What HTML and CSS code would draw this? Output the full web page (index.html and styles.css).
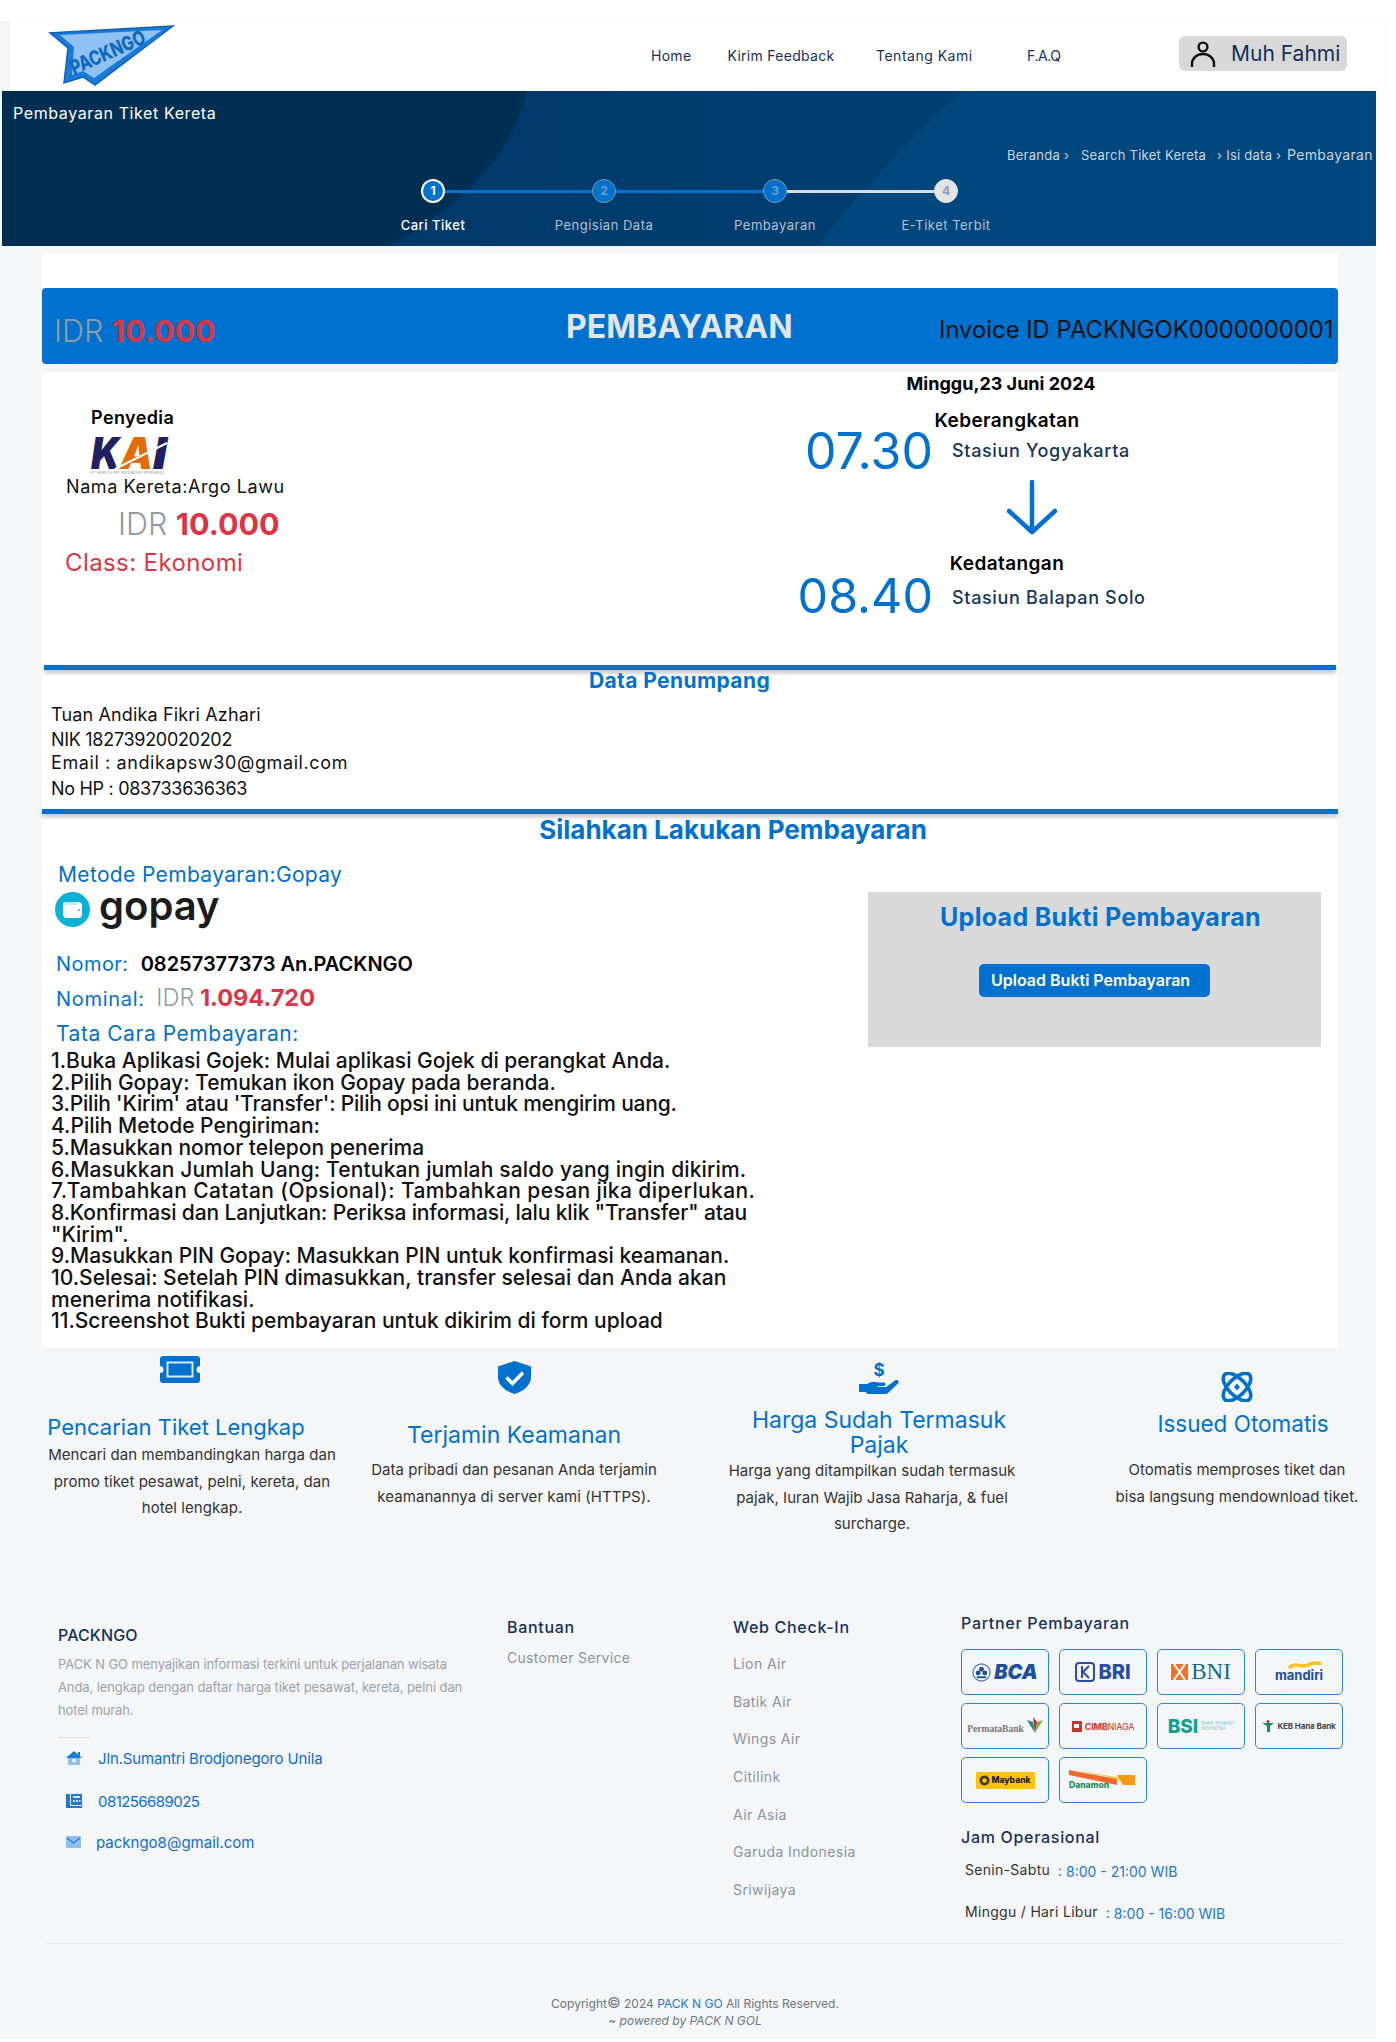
FILE: index.html
```html
<!DOCTYPE html>
<html lang="en">
<head>
    <meta charset="UTF-8">
    <title>Pembayaran Tiket Kereta</title>
    <link rel="stylesheet" href="styles.css">
</head>
<body>
<div class="page">
    <header class="topbar">
        <svg class="logo" viewBox="0 0 123 60" width="123" height="60">
            <polygon points="123,1 0,8 18,23 14,58 33,52 45,60" fill="#1a7ad8" stroke="#0f62b8" stroke-width="1.5"/>
            <polygon points="112,5 10,10 24,22 22,50 33,46 44,53" fill="#8fc2f2"/>
            <text x="24" y="50" class="logo_text" transform="rotate(-24 24 50)" textLength="80" lengthAdjust="spacingAndGlyphs">PACKNGO</text>
        </svg>
        <nav class="topnav">
            <a href="#">Home</a>
            <a href="#">Kirim Feedback</a>
            <a href="#">Tentang Kami</a>
            <a href="#">F.A.Q</a>
        </nav>
        <div class="user_pill">
            <svg viewBox="0 0 26 28" width="26" height="28" fill="none" stroke="#111" stroke-width="2.4">
                <circle cx="13" cy="7" r="4.4"/>
                <path d="M2 27v-3c0-6 5-10 11-10s11 4 11 10v3"/>
            </svg>
            <span>Muh Fahmi</span>
        </div>
    </header>

    <section class="hero">
        <svg class="hero_bg" viewBox="0 0 1374 155" preserveAspectRatio="none">
            <defs>
                <linearGradient id="heroBand" x1="0" x2="1" y1="0" y2="0">
                    <stop offset=".4" stop-color="#01396a"/>
                    <stop offset="1" stop-color="#013f71"/>
                </linearGradient>
            </defs>
            <path d="M0 0H960Q860 95 816 155H0Z" fill="url(#heroBand)"/>
            <path d="M0 0H525Q505 90 386 155H0Z" fill="#012f54"/>
        </svg>
        <h1 class="hero_title">Pembayaran Tiket Kereta</h1>
        <div class="crumbs">
            <span class="crumb_a">Beranda &#8250;</span>
            <span class="crumb_b">Search Tiket Kereta</span>
            <span class="crumb_c">&#8250; Isi data &#8250;</span>
            <span class="crumb_d">Pembayaran</span>
        </div>
        <div class="track">
            <span class="dot dot_on">1</span><span class="bar"></span>
            <span class="dot">2</span><span class="bar"></span>
            <span class="dot">3</span><span class="bar bar_off"></span>
            <span class="dot dot_off">4</span>
        </div>
        <div class="track_labels">
            <span class="label_on">Cari Tiket</span>
            <span>Pengisian Data</span>
            <span>Pembayaran</span>
            <span>E-Tiket Terbit</span>
        </div>
    </section>

    <div class="main">
        <div class="main_head">
            <div class="head_bar">
                <div class="price price_bar"><span class="idr">IDR</span> <b>10.000</b></div>
                <div class="head_title">PEMBAYARAN</div>
                <div class="invoice">Invoice ID PACKNGOK0000000001</div>
            </div>
        </div>

        <div class="detail">
            <div class="trip">
                <div class="trip_left">
                    <div class="provider">Penyedia</div>
                    <svg class="kai" viewBox="0 0 76 37" width="76" height="37">
                        <text x="0" y="32" class="kai_k" textLength="29" lengthAdjust="spacingAndGlyphs">K</text>
                        <text x="29" y="32" class="kai_a" textLength="33" lengthAdjust="spacingAndGlyphs">A</text>
                        <text x="62" y="32" class="kai_k" textLength="14" lengthAdjust="spacingAndGlyphs">I</text>
                        <path d="M24 32L76 6" stroke="#fff" stroke-width="2"/>
                        <text x="0" y="36.5" class="kai_sub" textLength="73">PT KERETA API INDONESIA (PERSERO)</text>
                    </svg>
                    <div class="train_name">Nama Kereta:Argo Lawu</div>
                    <div class="price price_trip"><span class="idr">IDR</span> <b>10.000</b></div>
                    <div class="train_class">Class: Ekonomi</div>
                </div>
                <div class="trip_right">
                    <div class="trip_date">Minggu,23 Juni 2024</div>
                    <div class="trip_label">Keberangkatan</div>
                    <div class="time_row">
                        <div class="time">07.30</div>
                        <div class="station">Stasiun Yogyakarta</div>
                    </div>
                    <svg class="trip_arrow" viewBox="0 0 50 55" width="50" height="55" fill="none" stroke="#0071ce" stroke-width="4.5" stroke-linecap="round" stroke-linejoin="round">
                        <path d="M25 2V52M2 31L25 52L48 31"/>
                    </svg>
                    <div class="trip_label trip_label_b">Kedatangan</div>
                    <div class="time_row time_row_b">
                        <div class="time">08.40</div>
                        <div class="station">Stasiun Balapan Solo</div>
                    </div>
                </div>
            </div>

            <div class="rule rule_in"></div>
            <h2 class="pax_title">Data Penumpang</h2>
            <div class="pax">
                <p>Tuan Andika Fikri Azhari</p>
                <p class="pax_nik">NIK 18273920020202</p>
                <p class="pax_mail">Email : andikapsw30@gmail.com</p>
                <p class="pax_hp">No HP : 083733636363</p>
            </div>
            <div class="rule"></div>

            <h2 class="pay_title">Silahkan Lakukan Pembayaran</h2>
            <div class="pay">
                <div class="pay_left">
                    <div class="pay_method">Metode Pembayaran:Gopay</div>
                    <div class="gopay">
                        <svg viewBox="0 0 35 35" width="35" height="35">
                            <circle cx="17.5" cy="17.5" r="17.5" fill="#0cb1d6"/>
                            <rect x="8" y="10" width="19" height="16" rx="4" fill="#fff"/>
                            <rect x="8" y="10" width="15" height="3" rx="1.5" fill="#bfe9f3"/>
                            <circle cx="24" cy="18" r="1" fill="#0cb1d6"/>
                        </svg>
                        <span>gopay</span>
                    </div>
                    <div class="pay_number"><span>Nomor:</span> <b>08257377373 An.PACKNGO</b></div>
                    <div class="pay_nominal"><span>Nominal:</span> <i>IDR</i> <b>1.094.720</b></div>
                    <div class="pay_howto">Tata Cara Pembayaran:</div>
                    <div class="steps">
                        1.Buka Aplikasi Gojek: Mulai aplikasi Gojek di perangkat Anda.<br>
                        2.Pilih Gopay: Temukan ikon Gopay pada beranda.<br>
                        <span class="line_tight">3.Pilih 'Kirim' atau 'Transfer': Pilih opsi ini untuk mengirim uang.</span><br>
                        4.Pilih Metode Pengiriman:<br>
                        5.Masukkan nomor telepon penerima<br>
                        <span class="line_loose">6.Masukkan Jumlah Uang: Tentukan jumlah saldo yang ingin dikirim.</span><br>
                        <span class="line_wide">7.Tambahkan Catatan (Opsional): Tambahkan pesan jika diperlukan.</span><br>
                        <span class="line_slim">8.Konfirmasi dan Lanjutkan: Periksa informasi, lalu klik "Transfer" atau</span><br>"Kirim".<br>
                        9.Masukkan PIN Gopay: Masukkan PIN untuk konfirmasi keamanan.<br>
                        10.Selesai: Setelah PIN dimasukkan, transfer selesai dan Anda akan<br>menerima notifikasi.<br>
                        11.Screenshot Bukti pembayaran untuk dikirim di form upload
                    </div>
                </div>
                <div class="upload">
                    <div class="upload_title">Upload Bukti Pembayaran</div>
                    <a href="#" class="upload_btn">Upload Bukti Pembayaran</a>
                </div>
            </div>
        </div>
    </div>

    <section class="features">
        <div class="feature feature_a">
            <svg viewBox="0 0 40 27" width="40" height="27">
                <path d="M3 0H37a3 3 0 0 1 3 3V10a3.5 3.5 0 0 0 0 7V24a3 3 0 0 1-3 3H3a3 3 0 0 1-3-3V17a3.5 3.5 0 0 0 0-7V3a3 3 0 0 1 3-3Z" fill="#0071ce"/>
                <rect x="7.5" y="6.5" width="25" height="14" fill="#0071ce" stroke="#d8e8f6" stroke-width="2"/>
            </svg>
            <h3>Pencarian Tiket Lengkap</h3>
            <p>Mencari dan membandingkan harga dan<br>promo tiket pesawat, pelni, kereta, dan<br>hotel lengkap.</p>
        </div>
        <div class="feature feature_b">
            <svg viewBox="0 0 33 33" width="33" height="33">
                <path d="M16.500 0L33 5.500V16C33 24 26 30 16.500 33C7 30 0 24 0 16V5.500Z" fill="#0071ce"/>
                <path d="M8.500 16.500L14.500 22.500L25 11.500" fill="none" stroke="#fff" stroke-width="3.600"/>
            </svg>
            <h3>Terjamin Keamanan</h3>
            <p>Data pribadi dan pesanan Anda terjamin<br>keamanannya di server kami (HTTPS).</p>
        </div>
        <div class="feature feature_c">
            <svg viewBox="0 0 40 32" width="40" height="32">
                <text x="20" y="14" text-anchor="middle" class="dollar">$</text>
                <path d="M0 22H8C12 20 15 19 19 20.500H25C27 20.500 27 24 25 24H18.500L18.500 25H27L36 18.500C38 17 41 19.500 39 21.500L29 31C28 32 27 32 26 32H8L7 30H0Z" fill="#0071ce"/>
            </svg>
            <h3>Harga Sudah Termasuk<br>Pajak</h3>
            <p>Harga yang ditampilkan sudah termasuk<br>pajak, Iuran Wajib Jasa Raharja, &amp; fuel<br>surcharge.</p>
        </div>
        <div class="feature feature_d">
            <svg viewBox="-1 0 34 30" width="34" height="30" fill="none" stroke="#0071ce" stroke-width="3.600">
                <ellipse cx="16" cy="15" rx="8.500" ry="17.500" transform="rotate(-45 16 15)"/>
                <ellipse cx="16" cy="15" rx="8.500" ry="17.500" transform="rotate(45 16 15)"/>
                <path d="M16 11.500L19 15L16 18.500L13 15Z" fill="#0071ce" stroke="none"/>
            </svg>
            <h3>Issued Otomatis</h3>
            <p>Otomatis memproses tiket dan<br>bisa langsung mendownload tiket.</p>
        </div>
    </section>

    <footer class="footer">
        <div class="footer_cols">
            <div class="col_about">
                <div class="col_head col_head_brand">PACKNGO</div>
                <p class="about_text">PACK N GO menyajikan informasi terkini untuk perjalanan wisata<br>Anda, lengkap dengan daftar harga tiket pesawat, kereta, pelni dan<br>hotel murah.</p>
                <div class="about_hr"></div>
                <div class="contact contact_road">
                    <svg viewBox="0 0 16 14" width="16" height="14">
                        <path d="M2 6H14V14H2Z" fill="#8fc0ee"/>
                        <path d="M0 7L8 0L12 3.500V1H14V5L16 7Z" fill="#1b78d6"/>
                        <rect x="6.500" y="8" width="3" height="3" fill="#fff"/>
                    </svg>
                    <span>Jln.Sumantri Brodjonegoro Unila</span>
                </div>
                <div class="contact contact_phone">
                    <svg viewBox="0 0 16 14" width="16" height="14">
                        <path d="M0 0H4V12H16V14H0Z" fill="#1b78d6"/>
                        <path d="M5 0H16V11H5Z" fill="#1b78d6"/>
                        <path d="M7 2H14V4H7ZM7 6H9V8H7ZM10 6H12V8H10ZM13 6H14.500V8H13ZM2 0V11" fill="#cfe3f7"/>
                    </svg>
                    <span>081256689025</span>
                </div>
                <div class="contact contact_mail">
                    <svg viewBox="0 0 15 12" width="15" height="12">
                        <rect width="15" height="12" rx="1" fill="#8fc0ee"/>
                        <path d="M1 2L7.500 7L14 2" fill="none" stroke="#1b78d6" stroke-width="1.200"/>
                    </svg>
                    <span>packngo8@gmail.com</span>
                </div>
            </div>
            <div class="col_help">
                <div class="col_head">Bantuan</div>
                <a href="#" class="col_link">Customer Service</a>
            </div>
            <div class="col_checkin">
                <div class="col_head">Web Check-In</div>
                <ul class="checkin_list">
                    <li>Lion Air</li>
                    <li>Batik Air</li>
                    <li>Wings Air</li>
                    <li>Citilink</li>
                    <li>Air Asia</li>
                    <li>Garuda Indonesia</li>
                    <li>Sriwijaya</li>
                </ul>
            </div>
            <div class="col_partner">
                <div class="col_head">Partner Pembayaran</div>
                <div class="banks">
                    <div class="bank">
                        <svg viewBox="0 0 20 20" width="19" height="19">
                            <circle cx="10" cy="10" r="9" fill="#fff" stroke="#5f82b8" stroke-width="1.500"/>
                            <circle cx="10" cy="6.500" r="2.600" fill="#1d4f9c"/>
                            <circle cx="6.500" cy="10.500" r="2.600" fill="#1d4f9c"/>
                            <circle cx="13.500" cy="10.500" r="2.600" fill="#1d4f9c"/>
                            <rect x="5" y="14" width="10" height="2" fill="#1d4f9c"/>
                        </svg>
                        <span class="b_bca">BCA</span>
                    </div>
                    <div class="bank">
                        <svg viewBox="0 0 20 20" width="20" height="20"><rect x="1" y="1" width="18" height="18" rx="3" fill="none" stroke="#2a4ea0" stroke-width="2"/><path d="M7 4V16M14 4L8 10L14 16" fill="none" stroke="#2a4ea0" stroke-width="2"/></svg>
                        <span class="b_bri">BRI</span>
                    </div>
                    <div class="bank">
                        <svg viewBox="0 0 17 16" width="17" height="16"><rect width="17" height="16" fill="#ee7326"/><path d="M3 0L14 16M14 0L3 16" stroke="#fff" stroke-width="2"/></svg>
                        <span class="b_bni">BNI</span>
                    </div>
                    <div class="bank bank_col">
                        <svg viewBox="0 0 34 8" width="34" height="8"><path d="M1 7C8 0 14 8 20 4C26 0 28 3 33 2" fill="none" stroke="#fbc31b" stroke-width="3.500"/></svg>
                        <span class="b_mandiri">mandiri</span>
                    </div>
                    <div class="bank">
                        <span class="b_permata">PermataBank</span>
                        <svg viewBox="0 0 16 18" width="16" height="18"><path d="M0 3L6 5L8 16Z" fill="#0f8f7f"/><path d="M6 0L10 5L8 16Z" fill="#c7203a"/><path d="M16 3L10 5L8 16Z" fill="#7cb53f"/></svg>
                    </div>
                    <div class="bank">
                        <svg viewBox="0 0 10 11" width="10" height="11"><rect width="10" height="11" fill="#c8352b"/><rect x="2" y="3" width="5" height="4" fill="#fff"/></svg>
                        <span class="b_cimb">CIMB<em>NIAGA</em></span>
                    </div>
                    <div class="bank">
                        <span class="b_bsi">BSI</span>
                        <span class="b_bsi_sub">BANK SYARIAH<br>INDONESIA</span>
                    </div>
                    <div class="bank">
                        <svg viewBox="0 0 12 12" width="12" height="12"><path d="M0 3H12L8 6V12H5V6Z" fill="#0e8a6d"/><circle cx="6" cy="1.500" r="1.500" fill="#d8262e"/></svg>
                        <span class="b_keb">KEB Hana Bank</span>
                    </div>
                    <div class="bank">
                        <div class="b_may">
                            <svg viewBox="0 0 12 12" width="11" height="11"><circle cx="6" cy="6" r="5.500" fill="#4a3a10"/><circle cx="6" cy="6" r="2.500" fill="#ffc20e"/></svg>
                            <span>Maybank</span>
                        </div>
                    </div>
                    <div class="bank bank_dana">
                        <svg viewBox="0 0 66 16" width="66" height="16"><path d="M0 0L48 9V15L0 5Z" fill="#ef6a2b"/><path d="M10 0L66 11V16L48 9Z" fill="#fbc31b"/><path d="M48 5H66V15H54Z" fill="#f59a12"/></svg>
                        <span class="b_dana">Danamon</span>
                    </div>
                </div>
                <div class="col_head hours_head">Jam Operasional</div>
                <div class="hours"><span>Senin-Sabtu</span><b>: 8:00 - 21:00 WIB</b></div>
                <div class="hours hours_b"><span>Minggu / Hari Libur</span><b>: 8:00 - 16:00 WIB</b></div>
            </div>
        </div>
        <div class="footer_rule"></div>
        <div class="copy">Copyright<span class="copy_mark">&copy;</span> 2024 <a href="#">PACK N GO</a> All Rights Reserved.</div>
        <div class="powered">~ powered by PACK N GOL</div>
    </footer>
</div>
</body>
</html>
```

FILE: styles.css
```css
*{
    padding:0;
    margin:0;
    box-sizing: border-box;
}
ul ,li {
    list-style: none;
}
a {
    text-decoration: none;
    color: inherit;
}
body {
    font-family: "Inter", "Noto Sans", sans-serif;
    color: #111;
    background: #fff;
}
.page {
    width: 1376px;
    margin-top: 48px;
    background: #f5f6f8;
}

/* top bar */
.topbar {
    display: flex;
    align-items: center;
    width: 1376px;
    height: 70px;
    margin: -27px 0 0 10px;
    background: #fff;
    box-shadow: 0 0 3px rgba(0,0,0,.06);
    position: relative;
}
.logo {
    margin: -2px 0 0 40px;
    flex: none;
    overflow: visible;
}
.logo_text {
    font: 800 20px "Inter", sans-serif;
    fill: #0f68c4;
}
.topnav {
    display: grid;
    grid-template-columns: 76.5px 148.500px 151px 152px;
    margin: -2px 0 0 478px;
    font-size: 14px;
    letter-spacing: .02em;
    color: #15305a;
}
.topnav a:nth-child(3) {
    letter-spacing: .5px;
}
.topnav a:nth-child(4) {
    letter-spacing: -.4px;
}
.user_pill {
    display: flex;
    align-items: center;
    gap: 15px;
    width: 168px;
    height: 35px;
    margin-bottom: 5px;
    padding-left: 11px;
    background: #d9d9d9;
    border-radius: 6px;
    font-size: 21px;
    color: #15305a;
}

/* hero with the stepper */
.hero {
    position: relative;
    width: 1374px;
    height: 155px;
    margin-left: 2px;
    background: #00477e;
    color: #fff;
    overflow: hidden;
}
.hero_bg {
    position: absolute;
    left: 0;
    top: 0;
    width: 100%;
    height: 100%;
}
.hero_title, .crumbs, .track, .track_labels {
    position: relative;
}
.hero_title {
    padding: 10px 0 0 11px;
    font-size: 16px;
    line-height: 24px;
    font-weight: 400;
    letter-spacing: .6px;
}
.crumbs {
    display: flex;
    height: 20px;
    margin-top: 20px;
    padding-left: 1005px;
    font-size: 13px;
    line-height: 20px;
    letter-spacing: .25px;
    color: #c9d4df;
    white-space: nowrap;
}
.crumb_a { width: 74px; }
.crumb_b { width: 136px; }
.crumb_c { width: 70px; }
.crumb_d {
    font-size: 14px;
    letter-spacing: .3px;
}
.track {
    display: flex;
    align-items: center;
    margin: 14px 0 0 419px;
}
.dot {
    width: 24px;
    height: 24px;
    border-radius: 50%;
    border: 1px solid #7e9cb8;
    background: #0071ce;
    color: #6f9ac2;
    font-size: 12px;
    font-weight: 700;
    line-height: 22px;
    text-align: center;
}
.dot_on {
    border: 2px solid #fff;
    color: #fff;
    line-height: 20px;
}
.dot_off {
    border-color: #e4e4e4;
    background: #e4e4e4;
    color: #8c9cb8;
}
.bar {
    width: 147px;
    height: 3px;
    background: #0071ce;
}
.bar_off {
    background: #dcdcdc;
}
.track_labels {
    display: grid;
    grid-template-columns: repeat(4,171px);
    margin: 12px 0 0 345.500px;
    font-size: 13px;
    line-height: 20px;
    letter-spacing: .5px;
    text-align: center;
    color: #b4c0cc;
}
.label_on {
    color: #fff;
    font-weight: 500;
}

/* main panel */
.main {
    width: 1296px;
    margin: 8px 0 0 42px;
}
.main_head {
    padding-top: 34px;
    margin-bottom: 8px;
    background: #fff;
}
.head_bar {
    display: flex;
    align-items: center;
    height: 76px;
    padding-left: 12px;
    background: #0071ce;
    border-radius: 4px;
    white-space: nowrap;
}
.price .idr {
    font-weight: 300;
    color: #8f9ca3;
}
.price b {
    font-weight: 700;
    color: #dc3545;
}
.price_bar {
    flex: none;
    width: 512px;
    padding-top: 10px;
    font-size: 30.500px;
    line-height: 38px;
}
.head_title {
    flex: none;
    width: 373px;
    font-size: 32px;
    font-weight: 700;
    color: #e3e6e8;
}
.invoice {
    flex: none;
    padding-top: 6px;
    font-size: 23.800px;
    color: #111;
}
.detail {
    background: #fff;
    padding-bottom: 16px;
}

/* trip */
.trip {
    display: flex;
    height: 293px;
}
.trip_left {
    width: 740px;
    padding-top: 33px;
}
.provider {
    margin-left: 49px;
    font-size: 18px;
    line-height: 26px;
    font-weight: 600;
    letter-spacing: .4px;
    color: #000;
}
.kai {
    display: block;
    margin: 6px 0 0 49px;
    overflow: visible;
}
.kai_k {
    font: italic 900 44px "Inter", sans-serif;
    fill: #211f60;
}
.kai_a {
    font: italic 900 44px "Inter", sans-serif;
    fill: #e36a05;
}
.kai_sub {
    font: 3.500px "Inter", sans-serif;
    fill: #888;
}
.train_name {
    margin-left: 24px;
    font-size: 18px;
    line-height: 26px;
    letter-spacing: .6px;
}
.price_trip {
    margin: 2px 0 0 76px;
    font-size: 30.500px;
    line-height: 44px;
}
.train_class {
    margin: 1px 0 0 23px;
    font-size: 24px;
    line-height: 32px;
    letter-spacing: .4px;
    color: #dc3545;
}
.trip_date {
    width: 438px;
    font-size: 18px;
    line-height: 24px;
    font-weight: 700;
    text-align: center;
    color: #000;
}
.trip_label {
    width: 450px;
    margin-top: 12px;
    font-size: 19px;
    line-height: 26px;
    font-weight: 600;
    letter-spacing: .4px;
    text-align: center;
    color: #000;
}
.trip_label_b {
    margin-top: 16px;
}
.time_row {
    display: flex;
    align-items: center;
    gap: 19px;
    height: 34px;
}
.time_row_b {
    margin-top: 1px;
}
.time {
    width: 151px;
    font-size: 50px;
    text-align: right;
    color: #0071ce;
}
.time_row_b .time {
    font-size: 48.500px;
}
.station {
    padding-bottom: 2px;
    font-size: 18px;
    font-weight: 500;
    letter-spacing: .65px;
    color: #15365a;
}
.time_row_b .station {
    padding: 4px 0 0;
}
.trip_arrow {
    display: block;
    margin: 12px 0 0 225px;
}

/* passenger */
.rule {
    height: 5px;
    background: #0071ce;
    box-shadow: 0 3px 4px rgba(0,0,0,.25);
}
.rule_in {
    margin: 0 2px;
}
.pax_title {
    padding-right: 21px;
    font-size: 21px;
    line-height: 22px;
    font-weight: 700;
    letter-spacing: .4px;
    text-align: center;
    color: #0071ce;
}
.pax {
    margin: 11px 0 8px 9px;
    font-size: 18px;
    line-height: 24px;
    letter-spacing: .15px;
}
.pax_nik {
    margin-top: 1px;
    letter-spacing: -.3px;
}
.pax_mail {
    margin-top: -1px;
    letter-spacing: .6px;
}
.pax_hp {
    margin-top: 2px;
    letter-spacing: -.3px;
}

/* payment */
.pay_title {
    padding: 1px 0 0 86px;
    font-size: 26px;
    line-height: 30px;
    font-weight: 700;
    text-align: center;
    color: #0071ce;
}
.pay {
    display: grid;
    grid-template-columns: 826px 453px;
}
.pay_method {
    margin: 16px 0 0 16px;
    font-size: 21px;
    line-height: 28px;
    letter-spacing: .35px;
    color: #0071ce;
}
.gopay {
    display: flex;
    align-items: center;
    gap: 9px;
    height: 35px;
    margin: 3px 0 0 13px;
}
.gopay span {
    font-size: 40px;
    line-height: 35px;
    font-weight: 600;
    color: #1c1c1c;
    padding-bottom: 8px;
}
.pay_number {
    margin: 24px 0 0 14px;
    font-size: 20px;
    line-height: 26px;
    letter-spacing: .45px;
    color: #0071ce;
}
.pay_number b {
    margin-left: 6px;
    font-weight: 600;
    letter-spacing: 0;
    color: #000;
}
.pay_nominal {
    margin: 6px 0 0 14px;
    font-size: 20px;
    line-height: 30px;
    color: #0071ce;
}
.pay_nominal span {
    letter-spacing: .7px;
}
.pay_nominal i {
    margin-left: 6px;
    font-size: 23.500px;
    font-style: normal;
    font-weight: 300;
    color: #8f9ca3;
}
.pay_nominal b {
    font-size: 23.500px;
    font-weight: 700;
    color: #dc3545;
}
.pay_howto {
    margin: 6px 0 0 14px;
    font-size: 21px;
    line-height: 28px;
    letter-spacing: .55px;
    color: #0071ce;
}
.steps {
    width: 760px;
    margin: 2px 0 0 9px;
    font-size: 21px;
    line-height: 21.700px;
    font-weight: 500;
    color: #111;
}
.line_tight { letter-spacing: -.2px; }
.line_slim { letter-spacing: -.13px; }
.line_loose { letter-spacing: .15px; }
.line_wide { letter-spacing: .4px; }
.upload {
    height: 155px;
    margin-top: 47px;
    padding: 10px 0 0 12px;
    background: #d9d9d9;
}
.upload_title {
    font-size: 25px;
    line-height: 30px;
    font-weight: 700;
    letter-spacing: .3px;
    text-align: center;
    color: #0071ce;
}
.upload_btn {
    display: block;
    width: 231px;
    height: 33px;
    margin: 32px 0 0 99px;
    padding-left: 12px;
    background: #0071ce;
    border-radius: 5px;
    font-size: 16px;
    line-height: 33px;
    font-weight: 600;
    color: #fff;
}

/* features */
.features {
    display: grid;
    grid-template-columns: 304px 340px 390px 302px;
    height: 240px;
    padding-left: 40px;
}
.feature {
    text-align: center;
}
.feature svg {
    display: block;
    margin: 0 auto;
}
.feature h3 {
    font-size: 23px;
    line-height: 30px;
    font-weight: 400;
    color: #0071ce;
    white-space: nowrap;
}
.feature p {
    font-size: 15px;
    line-height: 26.500px;
    letter-spacing: .05px;
    color: #333;
    white-space: nowrap;
}
.feature_a { padding-top: 8px; }
.feature_a svg { margin-left: 120px; }
.feature_a h3 {
    margin: 29px 32px 0 0;
    font-size: 22px;
}
.feature_b { padding-top: 13px; }
.feature_b h3 { margin-top: 26px; }
.feature_b p { margin-top: 7px; }
.feature_c { padding-top: 14px; }
.feature_c h3 {
    margin-top: 14px;
    line-height: 25px;
}
.feature_c p {
    margin-right: 14px;
}
.dollar {
    font: 700 17px "Inter", sans-serif;
    fill: #0071ce;
}
.feature_d {
    padding: 24px 0 0 24px;
}
.feature_d h3 {
    margin-top: 7px;
    padding-left: 12px;
    font-size: 22.500px;
}
.feature_d p { margin-top: 18px; }

/* footer */
.footer {
    padding-top: 24px;
}
.footer_cols {
    display: grid;
    grid-template-columns: 449px 226px 228px 1fr;
    padding-left: 58px;
}
.col_head {
    font-size: 16px;
    line-height: 22px;
    font-weight: 500;
    letter-spacing: .7px;
    color: #15305a;
}
.col_head_brand {
    letter-spacing: .1px;
}
.col_about { padding-top: 12px; }
.col_help, .col_checkin { padding-top: 4px; }
.about_text {
    margin-top: 7px;
    font-size: 13px;
    line-height: 23px;
    letter-spacing: -.1px;
    color: #9aa3ab;
    white-space: nowrap;
}
.about_hr {
    width: 32px;
    height: 1px;
    margin: 15px 0 9px;
    background: #ddd;
}
.contact {
    display: flex;
    align-items: center;
    gap: 16px;
    height: 22px;
    margin: 0 0 20px 8px;
    font-size: 15px;
    color: #0d6ecf;
}
.contact_road {
    margin-bottom: 21px;
    letter-spacing: -.15px;
}
.contact_phone {
    margin-bottom: 19px;
    letter-spacing: -.55px;
}
.contact_mail {
    gap: 15px;
}
.col_link {
    display: block;
    margin-top: 9px;
    font-size: 14px;
    line-height: 22px;
    letter-spacing: .3px;
    color: #8a94a0;
}
.checkin_list {
    margin-top: 15px;
    font-size: 14px;
    line-height: 22px;
    letter-spacing: .4px;
    color: #8a94a0;
}
.checkin_list li {
    margin-bottom: 15.600px;
}
.banks {
    display: grid;
    grid-template-columns: repeat(4,88px);
    grid-auto-rows: 46px;
    gap: 8px 10px;
    margin-top: 15px;
}
.bank {
    display: flex;
    align-items: center;
    justify-content: center;
    gap: 3px;
    border: 1.500px solid #2a85e0;
    border-radius: 5px;
    white-space: nowrap;
}
.bank_col {
    flex-direction: column;
    gap: 0;
    padding-left: 12px;
}
.b_bca {
    font: italic 900 20px "Inter", sans-serif;
    color: #1d4f9c;
}
.b_bri {
    font: 800 20px "Inter", sans-serif;
    color: #2a4ea0;
}
.b_bni {
    font: 400 23px "Liberation Serif", serif;
    color: #146d7d;
}
.b_mandiri {
    margin: -2px 12px 0 0;
    font: 700 13px "Inter", sans-serif;
    color: #1d4f9c;
}
.b_permata {
    font: 700 9.500px "Liberation Serif", serif;
    color: #777;
    padding-top: 6px;
}
.b_cimb {
    font: 700 9px "Inter", sans-serif;
    letter-spacing: -.2px;
    color: #c8352b;
}
.b_cimb em {
    font-style: normal;
    font-weight: 400;
}
.b_bsi {
    font: 800 19px "Inter", sans-serif;
    color: #14a08f;
}
.b_bsi_sub {
    font: 4.500px/5px "Inter", sans-serif;
    color: #7cc9bf;
}
.b_keb {
    font: 700 8px "Inter", sans-serif;
    color: #444;
    letter-spacing: -.1px;
}
.b_may {
    display: flex;
    align-items: center;
    gap: 2px;
    width: 59px;
    height: 17px;
    padding-left: 3px;
    background: #ffc20e;
    font: 800 8.500px "Inter", sans-serif;
    color: #222;
}
.bank_dana {
    flex-direction: column;
    gap: 0;
    align-items: flex-start;
    padding-left: 9px;
}
.b_dana {
    margin-top: -6px;
    font: 800 8.500px "Inter", sans-serif;
    color: #1c8a5a;
}
.hours_head {
    margin-top: 23px;
}
.hours {
    display: flex;
    gap: 8px;
    margin: 11px 0 0 4px;
    font-size: 14px;
    line-height: 22px;
    letter-spacing: .3px;
    color: #333;
}
.hours b {
    padding-top: 2px;
    font-weight: 400;
    letter-spacing: 0;
    color: #1b78d6;
}
.hours_b {
    margin-top: 18px;
}
.footer_rule {
    width: 1297px;
    height: 1px;
    margin: 18px 0 0 46px;
    background: #e6e8ea;
}
.copy {
    margin-top: 50px;
    padding-left: 14px;
    font-size: 12px;
    line-height: 18px;
    text-align: center;
    color: #6d7680;
}
.copy a {
    color: #1b78d6;
}
.copy_mark {
    font-size: 15px;
}
.powered {
    padding-bottom: 10px;
    padding-right: 6px;
    font-size: 12px;
    line-height: 16px;
    font-style: italic;
    text-align: center;
    color: #6d7680;
}
```
